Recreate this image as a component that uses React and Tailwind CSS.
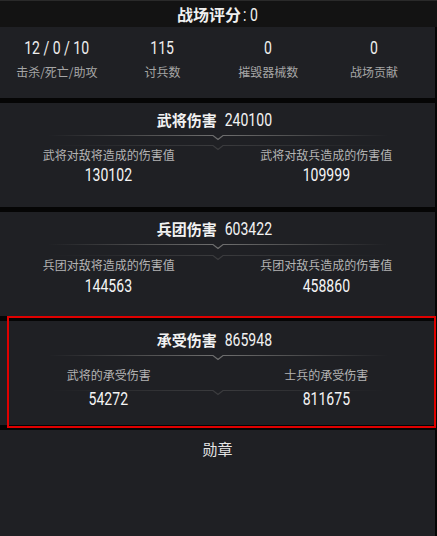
import React from "react";

const F = "font-['Noto_Sans_CJK_SC','Noto_Sans',sans-serif]";
const N = "font-['Roboto','Noto_Sans_CJK_SC',sans-serif] inline-block scale-x-[0.78]";

function Num({ children, className = "" }) {
  return <span className={`${N} ${className}`}>{children}</span>;
}

function Divider({ faint = false }) {
  return (
    <svg width="340" height="8" className="block mx-auto" style={{ opacity: faint ? 0.35 : 1 }}>
      <defs>
        <linearGradient id={faint ? "gf" : "gm"} x1="0" x2="1" y1="0" y2="0">
          <stop offset="0" stopColor="#5a5a5a" stopOpacity="0" />
          <stop offset="0.3" stopColor="#5e5e5e" stopOpacity="0.8" />
          <stop offset="0.5" stopColor="#707070" stopOpacity="1" />
          <stop offset="0.7" stopColor="#5e5e5e" stopOpacity="0.8" />
          <stop offset="1" stopColor="#5a5a5a" stopOpacity="0" />
        </linearGradient>
      </defs>
      <path
        d="M0 1.5 H165 L170 5.5 L175 1.5 H340"
        fill="none"
        stroke={`url(#${faint ? "gf" : "gm"})`}
        strokeWidth="1.2"
      />
    </svg>
  );
}

function Panel({ title, value, left, right, titleTop, labelGap, valueGap, faintTop }) {
  return (
    <div className="relative h-[104px] w-[435px] bg-[#1f2024] shrink-0">
      <div className="absolute left-0 right-0" style={{ top: faintTop }}>
        <Divider faint />
      </div>
      <div className="relative flex flex-col" style={{ paddingTop: titleTop }}>
        <div className="flex items-center justify-center h-[20px]">
          <span className={`${F} text-[15px] leading-[20px] font-bold text-[#f2f2f2]`}>{title}</span>
          <Num className="text-[18px] leading-[20px] text-[#f2f2f2] ml-[1px]">{value}</Num>
        </div>
        <div className="mt-[4px]">
          <Divider />
        </div>
        <div className="grid grid-cols-2" style={{ marginTop: labelGap }}>
          {[left, right].map((c, i) => (
            <div key={i} className="flex flex-col items-center">
              <div className={`${F} text-[12px] leading-[16px] text-[#b4b4b4]`}>{c[0]}</div>
              <div className="h-[20px] flex justify-center" style={{ marginTop: valueGap }}>
                <Num className="text-[18px] leading-[20px] text-[#f4f4f4]">{c[1]}</Num>
              </div>
            </div>
          ))}
        </div>
      </div>
    </div>
  );
}

export default function App() {
  const stats = [
    ["12 / 0 / 10", "击杀/死亡/助攻"],
    ["115", "讨兵数"],
    ["0", "摧毁器械数"],
    ["0", "战场贡献"],
  ];
  return (
    <div className="relative w-[437px] h-[536px] bg-[#050505] overflow-hidden flex flex-col">
      <div className="h-[27px] w-[437px] bg-[#131313] border-t border-[#2a2a2a] flex items-center justify-center shrink-0">
        <span className={`${F} text-[16px] font-bold text-[#f0f0f0]`}>战场评分</span>
        <Num className="text-[18px] text-[#f0f0f0]">: 0</Num>
      </div>
      <div className="h-[71px] w-[435px] bg-[#1f2024] grid grid-cols-4 pl-[4px] pr-[8px] pt-[11px] shrink-0">
        {stats.map((s, i) => (
          <div key={i} className="flex flex-col items-center">
            <div className="h-[20px] flex justify-center">
              <Num className="text-[18px] leading-[20px] text-[#eeeeee] whitespace-pre">{s[0]}</Num>
            </div>
            <div className={`${F} mt-[6px] text-[12px] leading-[16px] text-[#a6a6a6]`}>{s[1]}</div>
          </div>
        ))}
      </div>
      <div className="h-[5px] shrink-0" />
      <Panel
        title="武将伤害"
        value="240100"
        left={["武将对敌将造成的伤害值", "130102"]}
        right={["武将对敌兵造成的伤害值", "109999"]}
        titleTop={7}
        labelGap={5}
        valueGap={2}
        faintTop={41}
      />
      <div className="h-[5px] shrink-0" />
      <Panel
        title="兵团伤害"
        value="603422"
        left={["兵团对敌将造成的伤害值", "144563"]}
        right={["兵团对敌兵造成的伤害值", "458860"]}
        titleTop={7}
        labelGap={6}
        valueGap={3}
        faintTop={42}
      />
      <div className="h-[5px] shrink-0" />
      <Panel
        title="承受伤害"
        value="865948"
        left={["武将的承受伤害", "54272"]}
        right={["士兵的承受伤害", "811675"]}
        titleTop={9}
        labelGap={5}
        valueGap={6}
        faintTop={68}
      />
      <div className="h-[5px] shrink-0" />
      <div className="flex-1 w-[435px] bg-[#1f2024] flex justify-center pt-[9px]">
        <span className={`${F} text-[15px] leading-[20px] text-[#e4e4e4]`}>勋章</span>
      </div>
      <div className="absolute left-[7px] top-[316px] w-[429px] h-[112px] border-2 border-[#e00000]" />
    </div>
  );
}
